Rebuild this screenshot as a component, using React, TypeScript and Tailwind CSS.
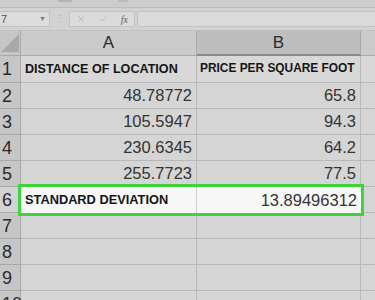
import { Check, X } from "lucide-react";

const rows = [
  { n: "2", a: "48.78772", b: "65.8" },
  { n: "3", a: "105.5947", b: "94.3" },
  { n: "4", a: "230.6345", b: "64.2" },
  { n: "5", a: "255.7723", b: "77.5" },
];

const font = "font-['Liberation_Sans',Arial,sans-serif]";

function RowHead({ n, light }: { n: string; light?: boolean }) {
  return (
    <div
      className={`w-[21px] shrink-0 border-r border-b border-[#a9a9a9] pl-[2px] text-[18px] leading-none text-[#2a2a2a] flex items-center ${
        light ? "bg-[#d3d3d3]" : "bg-[#c6c6c6]"
      }`}
    >
      {n}
    </div>
  );
}

function Cells({ a, b, h = "h-[26px]" }: { a?: string; b?: string; h?: string }) {
  return (
    <>
      <div className={`w-[176px] shrink-0 ${h} border-r border-b border-[#b9b9b9] flex items-center justify-end pr-[4px] text-[16.5px] text-[#333]`}>
        {a}
      </div>
      <div className={`w-[164px] shrink-0 ${h} border-r border-b border-[#b9b9b9] flex items-center justify-end pr-[4px] text-[16.5px] text-[#333]`}>
        {b}
      </div>
      <div className={`flex-1 ${h} border-b border-[#b9b9b9]`} />
    </>
  );
}

export default function App() {
  return (
    <div className={`w-[375px] h-[300px] overflow-hidden bg-[#d5d5d5] ${font}`}>
      {/* ribbon remnant */}
      <div className="h-[8px] bg-[#cdcdcd] border-b border-[#bdbdbd] relative">
        <div className="absolute left-[58px] top-0 h-[2px] w-[14px] bg-[#b5b5b5]" />
        <div className="absolute left-[118px] top-0 h-[2px] w-[10px] bg-[#bcbcbc]" />
      </div>

      {/* formula bar */}
      <div className="h-[23px] bg-[#d2d2d2] flex items-center border-b border-[#c2c2c2]">
        <div className="w-[50px] h-[16px] bg-[#dcdcdc] border border-[#c3c3c3] border-l-0 flex items-center justify-between pl-[1px] pr-[3px] text-[11px] text-[#555]">
          <span>7</span>
          <span className="text-[7px] text-[#777]">▼</span>
        </div>
        <div className="w-[19px] flex justify-center text-[9px] text-[#aaa] leading-none">⋮</div>
        <div className="w-[66px] h-[16px] bg-[#dbdbdb] border border-[#c3c3c3] flex items-center justify-around text-[#b3b3b3]">
          <X className="w-[10px] h-[10px]" strokeWidth={2} />
          <Check className="w-[10px] h-[10px]" strokeWidth={2} />
          <span className="font-['Liberation_Serif',serif] italic text-[10px] text-[#666]">fx</span>
        </div>
        <div className="flex-1 h-[16px] ml-[2px] bg-[#dadada] border border-[#c3c3c3] border-r-0" />
      </div>

      {/* column headers */}
      <div className="flex h-[25px]">
        <div className="w-[21px] shrink-0 bg-[#c6c6c6] border-r border-b border-[#a9a9a9] relative">
          <svg className="absolute left-0 top-[2px]" width="20" height="20" viewBox="0 0 20 20">
            <polygon points="19,1 19,19 1,19" fill="#a8a8a8" />
          </svg>
        </div>
        <div className="w-[176px] shrink-0 bg-[#cbcbcb] border-r border-b border-[#a9a9a9] flex items-center justify-center text-[17px] text-[#2a2a2a]">
          A
        </div>
        <div className="w-[164px] shrink-0 bg-[#bebebe] border-r border-[#a9a9a9] border-b-2 border-b-[#8c8c8c] flex items-center justify-center text-[17px] text-[#2a2a2a]">
          B
        </div>
        <div className="flex-1 bg-[#cbcbcb] border-b border-[#a9a9a9]" />
      </div>

      {/* row 1 */}
      <div className="flex h-[27px] bg-[#d8d8d8]">
        <RowHead n="1" />
        <div className="w-[176px] shrink-0 border-r border-b border-[#b9b9b9] flex items-center pl-[4px] text-[12.6px] font-bold text-[#151515] whitespace-nowrap">
          DISTANCE OF LOCATION
        </div>
        <div className="w-[164px] shrink-0 border-r border-b border-[#b9b9b9] flex items-center pl-[3px] text-[11.9px] font-bold text-[#151515] whitespace-nowrap overflow-hidden">
          PRICE PER SQUARE FOOT
        </div>
        <div className="flex-1 border-b border-[#b9b9b9]" />
      </div>

      {rows.map((r) => (
        <div key={r.n} className="flex h-[26px]">
          <RowHead n={r.n} />
          <Cells a={r.a} b={r.b} />
        </div>
      ))}

      {/* row 6 with selection */}
      <div className="flex h-[26px]">
        <RowHead n="6" light />
        <div className="w-[340px] shrink-0 flex bg-[#f7f7f7] outline-[3px] outline-solid outline-[#3ed43e] relative z-10">
          <div className="w-[176px] shrink-0 border-r border-[#d0d0d0] flex items-center pl-[4px] text-[12.8px] font-bold text-[#151515] whitespace-nowrap">
            STANDARD DEVIATION
          </div>
          <div className="flex-1 flex items-center justify-end pr-[4px] text-[16.5px] text-[#333]">
            13.89496312
          </div>
        </div>
        <div className="flex-1 border-b border-[#b9b9b9] border-l border-l-[#b9b9b9]" />
      </div>

      {["7", "8", "9", "10"].map((n) => (
        <div key={n} className="flex h-[26px]">
          <RowHead n={n} />
          <Cells />
        </div>
      ))}
    </div>
  );
}
